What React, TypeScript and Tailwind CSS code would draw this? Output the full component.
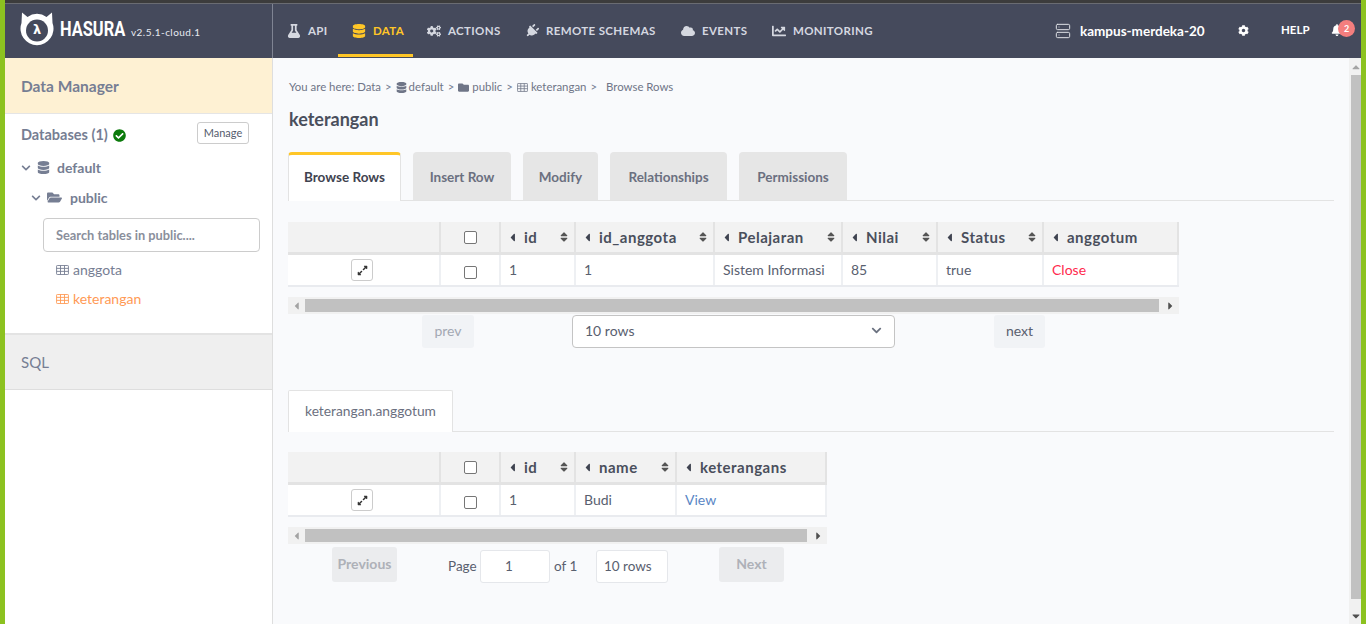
import {
  FaBell,
  FaCaretLeft,
  FaCaretRight,
  FaCaretUp,
  FaCaretDown,
  FaChartLine,
  FaCheckCircle,
  FaChevronDown,
  FaCloud,
  FaCog,
  FaCogs,
  FaDatabase,
  FaExpandAlt,
  FaFlask,
  FaFolder,
  FaFolderOpen,
  FaPlug,
  FaSort,
} from "react-icons/fa";
import { Server } from "lucide-react";
import type { ComponentType, ReactNode } from "react";

const font = "font-['Lato','Noto_Sans',sans-serif]";

type NavItem = {
  label: string;
  icon: ComponentType<{ className?: string }>;
  active?: boolean;
  width: string;
  iconCls?: string;
};

const navItems: NavItem[] = [
  { label: "API", icon: FaFlask, width: "w-[65px]" },
  { label: "DATA", icon: FaDatabase, active: true, width: "w-[75px]" },
  { label: "ACTIONS", icon: FaCogs, width: "w-[98px]" },
  { label: "REMOTE SCHEMAS", icon: FaPlug, width: "w-[156px]", iconCls: "rotate-45" },
  { label: "EVENTS", icon: FaCloud, width: "w-[91px]" },
  { label: "MONITORING", icon: FaChartLine, width: "w-[120px]" },
];

function TableIcon({ className = "" }: { className?: string }) {
  return (
    <svg viewBox="0 0 14 11" fill="none" stroke="currentColor" strokeWidth="1" className={className}>
      <rect x="0.5" y="0.5" width="13" height="10" rx="0.8" />
      <path d="M0.5 3.7H13.5M0.5 7H13.5M4.8 0.5V10.5M9.2 0.5V10.5" />
    </svg>
  );
}

function Logo() {
  return (
    <div className="relative w-[34px] h-[34px] mt-[-4px] flex-none">
      <svg viewBox="0 0 34 34" className="w-[34px] h-[34px]">
        <path
          d="M2 0.5 L7.5 5 A16 16 0 0 1 26.5 5 L32 0.5 L32.5 11 A16.5 16.5 0 1 1 1.5 11 Z"
          fill="#fff"
        />
        <circle cx="17" cy="18.5" r="11" fill="#454a5c" />
      </svg>
      <span className="absolute left-0 right-0 top-[9px] text-center text-[13px] leading-[18px] font-bold text-white font-['DejaVu_Sans',sans-serif]">
        λ
      </span>
    </div>
  );
}

function Header() {
  return (
    <div className="h-[54px] bg-[#454a5c] flex flex-none">
      <div className="w-[268px] flex-none border-r border-[#7f8493] flex items-center pl-[15px]">
        <Logo />
        <span className="ml-[6px] mb-[4px] w-[61px] flex-none text-[20px] font-bold text-white font-['Roboto',sans-serif] scale-x-[0.82] origin-left">
          HASURA
        </span>
        <span className="ml-[10px] mt-[2px] text-[10px] text-[#e8ebf2] tracking-[0.45px] whitespace-nowrap">v2.5.1-cloud.1</span>
      </div>
      <div className="flex">
        {navItems.map((n) => (
          <div
            key={n.label}
            className={`h-[53px] pl-[14px] pt-[3px] flex items-center gap-[7px] text-[11.5px] font-bold tracking-[0.35px] whitespace-nowrap border-b-[3px] ${n.width} ${
              n.active ? "text-[#ffc627] border-[#ffc627]" : "text-[#d5d8e0] border-transparent"
            }`}
          >
            <span className="w-[14px] flex justify-center flex-none">
              <n.icon className={`text-[14px] ${n.iconCls ?? ""}`} />
            </span>
            {n.label}
          </div>
        ))}
      </div>
      <div className="ml-auto flex items-center text-white font-bold">
        <Server size={16} strokeWidth={1.5} className="text-[#dfe1e6]" />
        <span className="ml-[9px] w-[125px] text-[13.5px] whitespace-nowrap">kampus-merdeka-20</span>
        <FaCog className="ml-[33px] text-[11px] mb-[2px]" />
        <span className="ml-[32px] w-[27px] text-[11.5px] mb-[2px]">HELP</span>
        <div className="relative ml-[23px] w-[30px] h-[20px] mb-[4px]">
          <FaBell className="text-[12px] absolute left-0 top-[5px]" />
          <span className="absolute left-[7px] top-[1px] w-[17px] h-[17px] rounded-full bg-[#f47e7e] text-[9px] flex items-center justify-center">
            2
          </span>
        </div>
      </div>
    </div>
  );
}

function Sidebar() {
  return (
    <div className="w-[268px] flex-none border-r border-[#dedede] bg-white flex flex-col">
      <div className="h-[56px] bg-[#fef1d3] border-b border-[#e5e5e5] flex items-center pl-[16px] pt-[2px] text-[15.5px] font-bold text-[#767e93]">
        Data Manager
      </div>
      <div className="h-[221px] border-b-[2px] border-[#e3e3e3]">
        <div className="flex items-center justify-between pl-[16px] pr-[23px] h-[42px]">
          <div className="flex items-center text-[14.5px] font-bold text-[#767e93]">
            Databases (1)
            <FaCheckCircle className="ml-[5px] text-[13px] text-[#0b7a0b]" />
          </div>
          <div className="h-[22px] w-[52px] bg-white border border-[#ccc] rounded-[3px] text-[11px] text-[#555c6e] flex items-center justify-center mb-[4px]">
            Manage
          </div>
        </div>
        <div className="flex items-center pl-[16px] mt-[1px] text-[14px] font-bold text-[#767e93]">
          <FaChevronDown className="text-[10px]" />
          <FaDatabase className="ml-[6px] text-[13px]" />
          <span className="ml-[7px]">default</span>
        </div>
        <div className="flex items-center pl-[26px] mt-[9px] text-[14px] font-bold text-[#767e93]">
          <FaChevronDown className="text-[10px]" />
          <FaFolderOpen className="ml-[6px] text-[15px]" />
          <span className="ml-[8px]">public</span>
        </div>
        <div className="ml-[38px] mr-[12px] mt-[10px] h-[34px] border border-[#ccc] rounded-[4px] flex items-center pl-[12px] pt-[1px] text-[12.8px] font-bold text-[#8a8f9c]">
          Search tables in public....
        </div>
        <div className="ml-[51px] mt-[7px] flex items-center text-[14px] text-[#767e93]">
          <TableIcon className="w-[13px] h-[10px] mr-[4px]" />
          anggota
        </div>
        <div className="ml-[51px] mt-[8px] flex items-center text-[14px] text-[#ff9a55]">
          <TableIcon className="w-[13px] h-[10px] mr-[4px]" />
          keterangan
        </div>
      </div>
      <div className="h-[55px] bg-[#efefef] border-b border-[#dedede] flex items-center pl-[16px] text-[15px] text-[#767e93]">
        SQL
      </div>
    </div>
  );
}

function Breadcrumb() {
  const sep = "text-[#767e93] mx-[4px]";
  return (
    <div className="flex items-center ml-[1px] text-[11.4px] text-[#6f7587] h-[16px] whitespace-nowrap">
      <span>You are here: Data</span>
      <span className={sep}>&gt;</span>
      <FaDatabase className="text-[11px] mr-[2px]" />
      <span>default</span>
      <span className={sep}>&gt;</span>
      <FaFolder className="text-[11px] mr-[3px]" />
      <span>public</span>
      <span className={sep}>&gt;</span>
      <TableIcon className="w-[11px] h-[9px] mr-[3px]" />
      <span>keterangan</span>
      <span className={sep}>&gt;</span>
      <span className="ml-[5px]">Browse Rows</span>
    </div>
  );
}

function Tab({ label, active, width }: { label: string; active?: boolean; width: string }) {
  return (
    <div
      className={`flex items-center justify-center text-[13.5px] font-bold ${width} ${
        active
          ? "h-[49px] pb-[2px] bg-white text-[#3f4350] border-t-[3px] border-[#ffc627] border-x border-x-[#e3e3e3] rounded-t-[4px] -mb-px relative"
          : "h-[48px] pt-[3px] bg-[#e6e6e6] text-[#6b7080] rounded-t-[4px]"
      }`}
    >
      {label}
    </div>
  );
}

type Col = { label?: string; w: string; sort?: boolean; check?: boolean };

function HeadCell({ col }: { col: Col }) {
  if (col.check) {
    return (
      <div className={`${col.w} flex-none h-full border-r-2 border-[#e3e3e3] flex items-center justify-center`}>
        <span className="w-[13px] h-[13px] rounded-[2px] border border-[#767676] bg-white" />
      </div>
    );
  }
  return (
    <div className={`${col.w} flex-none h-full border-r-2 border-[#e3e3e3] flex items-center pl-[5px] pr-[4px]`}>
      {col.label && (
        <>
          <FaCaretLeft className="text-[13px] text-[#3f4350] flex-none" />
          <span className="ml-[5px] text-[15px] font-bold text-[#4a4f5c] tracking-[0.5px]">{col.label}</span>
          {col.sort && <FaSort className="ml-auto text-[12px] text-[#555]" />}
        </>
      )}
    </div>
  );
}

function BodyCell({ w, children, cls = "text-[#59606f]" }: { w: string; children?: ReactNode; cls?: string }) {
  return (
    <div className={`${w} flex-none h-full border-r-2 border-[#eef0f3] flex items-center pl-[8px] pb-[2px] text-[14px] ${cls}`}>
      {children}
    </div>
  );
}

function Table({ cols, row }: { cols: Col[]; row: { text: ReactNode; cls?: string }[] }) {
  return (
    <div className="w-fit">
      <div className="h-[33px] bg-[#f2f2f2] border-b-[3px] border-[#e3e3e3] flex">
        {cols.map((c, i) => (
          <HeadCell key={i} col={c} />
        ))}
      </div>
      <div className="h-[32px] bg-white border-b-2 border-[#e9ebef] flex">
        <div className={`${cols[0].w} flex-none h-full border-r-2 border-[#eef0f3] flex items-center justify-center pr-[3px]`}>
          <span className="w-[22px] h-[22px] rounded-[3px] border border-[#ccc] bg-white flex items-center justify-center">
            <FaExpandAlt className="text-[11px] text-[#333]" />
          </span>
        </div>
        <div className={`${cols[1].w} flex-none h-full border-r-2 border-[#eef0f3] flex items-center justify-center pt-[4px]`}>
          <span className="w-[13px] h-[13px] rounded-[2px] border border-[#767676] bg-white" />
        </div>
        {cols.slice(2).map((c, i) => (
          <BodyCell key={i} w={c.w} cls={row[i]?.cls}>
            {row[i]?.text}
          </BodyCell>
        ))}
      </div>
    </div>
  );
}

function HScroll({ width, thumb }: { width: string; thumb: string }) {
  return (
    <div className={`${width} mt-[10px] h-[17px] bg-[#f1f1f1] flex items-center`}>
      <FaCaretLeft className="w-[17px] flex-none text-[12px] text-[#a3a3a3]" />
      <div className={`${thumb} h-[13px] bg-[#c1c1c1]`} />
      <FaCaretRight className="ml-auto w-[17px] flex-none text-[12px] text-[#505050]" />
    </div>
  );
}

const mainCols: Col[] = [
  { w: "w-[153px]" },
  { w: "w-[60px]", check: true },
  { label: "id", w: "w-[75px]", sort: true },
  { label: "id_anggota", w: "w-[139px]", sort: true },
  { label: "Pelajaran", w: "w-[128px]", sort: true },
  { label: "Nilai", w: "w-[95px]", sort: true },
  { label: "Status", w: "w-[106px]", sort: true },
  { label: "anggotum", w: "w-[135px]" },
];

const relCols: Col[] = [
  { w: "w-[153px]" },
  { w: "w-[60px]", check: true },
  { label: "id", w: "w-[75px]", sort: true },
  { label: "name", w: "w-[101px]", sort: true },
  { label: "keterangans", w: "w-[150px]" },
];

function Main() {
  return (
    <div className="flex-1 min-w-0 bg-[#f9fafc] pl-[15px] pr-[15px] pt-[21px] overflow-hidden">
      <Breadcrumb />
      <div className="mt-[12px] ml-[1px] text-[18px] leading-[24px] font-bold text-[#4a4f5c]">keterangan</div>
      <div className="mt-[21px] border-b border-[#e3e3e3] flex gap-[12px]">
        <Tab label="Browse Rows" active width="w-[113px]" />
        <Tab label="Insert Row" width="w-[98px]" />
        <Tab label="Modify" width="w-[75px]" />
        <Tab label="Relationships" width="w-[117px]" />
        <Tab label="Permissions" width="w-[108px]" />
      </div>
      <div className="mt-[21px]">
        <Table
          cols={mainCols}
          row={[
            { text: "1" },
            { text: "1" },
            { text: "Sistem Informasi" },
            { text: "85" },
            { text: "true" },
            { text: "Close", cls: "text-[#ff2a4d]" },
          ]}
        />
        <HScroll width="w-[891px]" thumb="w-[854px]" />
        <div className="flex w-[891px] h-[33px] mt-[1px]">
          <div className="ml-[134px] w-[52px] h-[33px] pb-[2px] rounded-[3px] bg-[#f1f3f6] text-[14px] text-[#a3a8b3] flex items-center justify-center">
            prev
          </div>
          <div className="ml-[98px] w-[323px] h-[33px] pb-[2px] rounded-[4px] border border-[#c4c4c4] bg-white text-[14px] text-[#59606f] flex items-center px-[12px] justify-between">
            10 rows
            <FaChevronDown className="text-[11px] text-[#6b7280]" />
          </div>
          <div className="ml-[99px] w-[51px] h-[33px] pb-[2px] rounded-[3px] bg-[#f1f3f6] text-[14px] text-[#59606f] flex items-center justify-center">
            next
          </div>
        </div>
      </div>
      <div className="mt-[42px] border-b border-[#e3e3e3]">
        <div className="w-[165px] h-[42px] bg-white border border-b-0 border-[#e3e3e3] rounded-t-[2px] -mb-px relative text-[13.8px] text-[#6b7080] flex items-center justify-center">
          keterangan.anggotum
        </div>
      </div>
      <div className="mt-[20px]">
        <Table
          cols={relCols}
          row={[{ text: "1" }, { text: "Budi" }, { text: "View", cls: "text-[#5a86c5]" }]}
        />
        <HScroll width="w-[539px]" thumb="w-[502px]" />
        <div className="flex items-start w-[539px] mt-[3px] h-[37px]">
          <div className="ml-[44px] w-[65px] h-[35px] pb-[2px] rounded-[3px] bg-[#ebecee] text-[14px] font-bold text-[#aeb1b8] flex items-center justify-center">
            Previous
          </div>
          <div className="ml-[51px] mt-[3px] flex items-center text-[13.5px] text-[#59606f] whitespace-nowrap">
            <span className="w-[29px]">Page</span>
            <span className="ml-[3px] w-[70px] h-[33px] bg-white border border-[#e5e7eb] rounded-[3px] flex items-center pl-[24px]">1</span>
            <span className="ml-[4px] w-[23px]">of 1</span>
            <span className="ml-[19px] w-[72px] h-[33px] bg-white border border-[#e5e7eb] rounded-[3px] flex items-center pl-[7px]">10 rows</span>
          </div>
          <div className="ml-[51px] w-[65px] h-[35px] pb-[2px] rounded-[3px] bg-[#ebecee] text-[14px] font-bold text-[#aeb1b8] flex items-center justify-center">
            Next
          </div>
        </div>
      </div>
    </div>
  );
}

function VScroll() {
  return (
    <div className="w-[12px] flex-none bg-[#f1f1f1] flex flex-col items-end">
      <div className="h-[17px] w-[10px] flex items-center justify-center">
        <FaCaretUp className="text-[12px] text-[#a3a3a3]" />
      </div>
      <div className="h-[524px] w-[10px] bg-[#c1c1c1]" />
      <div className="mt-auto h-[17px] w-[10px] flex items-center justify-center">
        <FaCaretDown className="text-[12px] text-[#505050]" />
      </div>
    </div>
  );
}

export default function App() {
  return (
    <div className={`${font} h-[624px] w-[1366px] overflow-hidden flex bg-white`}>
      <div className="w-[5px] flex-none bg-[#8cc220]" />
      <div className="flex-1 min-w-0 flex flex-col">
        <div className="h-[3px] bg-[#3c3c3c] flex-none" />
        <div className="h-px bg-[#6a6c72] flex-none" />
        <Header />
        <div className="flex-1 min-h-0 flex">
          <Sidebar />
          <Main />
          <VScroll />
        </div>
      </div>
      <div className="w-[5px] flex-none bg-[#8cc220]" />
    </div>
  );
}
